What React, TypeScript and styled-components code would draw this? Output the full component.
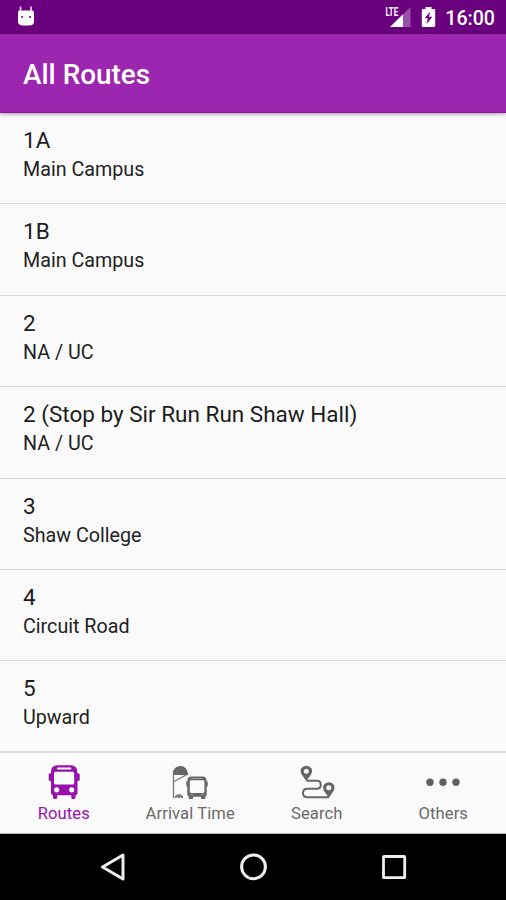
import React from 'react';
import styled, { createGlobalStyle } from 'styled-components';

const GlobalStyle = createGlobalStyle`
  * { box-sizing: border-box; }
  body { margin: 0; background: #fafafa; }
`;

const Screen = styled.div`
  width: 506px;
  height: 900px;
  display: flex;
  flex-direction: column;
  overflow: hidden;
  background: #fafafa;
  font-family: Roboto, sans-serif;
`;

const StatusBar = styled.header`
  height: 34px;
  flex: none;
  display: flex;
  align-items: center;
  justify-content: space-between;
  padding: 0 11px 0 17px;
  background: #6a007d;
  color: #fff;
`;

const StatusIcons = styled.div`
  display: flex;
  align-items: center;
`;

const Clock = styled.span`
  margin-left: 9.5px;
  font-size: 19.6px;
  font-weight: 500;
  line-height: 32px;
  padding-top: 4px;
`;

const AppBar = styled.div`
  height: 79px;
  flex: none;
  display: flex;
  align-items: center;
  padding: 4px 23px 0;
  background: #9d26b1;
  border-bottom: 1px solid #8b1aa0;
  box-shadow: 0 1px 4px rgba(0, 0, 0, 0.38);
  z-index: 1;
`;

const Title = styled.h1`
  margin: 0;
  color: #fff;
  font-size: 27.9px;
  font-weight: 500;
  line-height: 36px;
`;

const RouteList = styled.ul`
  flex: 1;
  margin: 0;
  padding: 0;
  list-style: none;
  display: grid;
  grid-template-rows: repeat(7, 91.4px);
`;

const RouteRow = styled.li`
  padding: 13px 23px 0;
  border-bottom: 1px solid #d9d9d9;

  &:last-child { border-bottom: 2px solid #dedede; }
`;

const RouteName = styled.div`
  font-size: 22.5px;
  line-height: 28px;
  color: #1c1c1c;
`;

const RouteArea = styled.div`
  margin-top: 2px;
  font-size: 19.7px;
  line-height: 28px;
  color: #222;
`;

const TabBar = styled.nav`
  height: 81px;
  flex: none;
  display: grid;
  grid-template-columns: repeat(4, 1fr);
  background: #fafafa;
  border-bottom: 1px solid #b5b5b5;
`;

const Tab = styled.div<{ $active?: boolean }>`
  display: flex;
  flex-direction: column;
  align-items: center;
  padding: 10px 0 0 1px;
  color: ${(p) => (p.$active ? '#9712aa' : '#6a6a6a')};
  font-size: 16.6px;
  line-height: 22px;
  letter-spacing: 0.1px;

  svg { display: block; height: 38px; margin-bottom: 2px; }
`;

const SystemBar = styled.footer`
  height: 66px;
  flex: none;
  display: flex;
  justify-content: center;
  align-items: center;
  gap: 100px;
  background: #000;
`;

const AndroidIcon = () => (
  <svg width="18" height="24" viewBox="0 0 18 24" fill="#fff">
    <path d="M3.500 1.500v5M14 1.500v5" stroke="#e3c8e8" strokeWidth="1.8" />
    <path d="M2.500 5.500h12.800q1.700 0 1.700 1.700v9.300q0 4-5 4H6q-5 0-5-4V7.200q0-1.700 1.500-1.700z" />
    <circle cx="5" cy="12" r="1" fill="#6a007d" />
    <circle cx="13" cy="12" r="1" fill="#6a007d" />
  </svg>
);

const SignalIcon = () => (
  <svg width="27" height="24" viewBox="0 0 27 24">
    <path d="M25.500 2v20H5z" fill="#9652a3" />
    <path d="M18 9.300V22H5z" fill="#fff" />
    <path d="M0 0h13v13H0z" fill="#6a007d" />
    <text x="0.5" y="10.8" fontFamily="Roboto, sans-serif" fontSize="12" fontWeight="700" textLength="12.5" lengthAdjust="spacingAndGlyphs" fill="#fff">LTE</text>
  </svg>
);

const BatteryIcon = () => (
  <svg width="15" height="22" viewBox="0 0 15 22">
    <path d="M4.500 1h6v2H13q1.200 0 1.200 1.200v15.600q0 1.200-1.200 1.200H2Q.8 21 .8 19.800V4.200Q.8 3 2 3h2.500z" fill="#fff" />
    <path d="M9.200 5.500 3.600 12.300h3.200l-1.300 5.700 5.900-7.200H8z" fill="#6a007d" />
  </svg>
);

const IconGap = styled.span`
  width: 9px;
`;

const BusIcon = () => (
  <svg width="34" viewBox="0 0 34 38" fill="currentColor">
    <path fillRule="evenodd" d="M10 2.300h14q5.800.4 6.300 6v2h1.200q1.200.2 1.200 1.500v4.700q0 1.500-1.400 1.500h-.8V30q0 2-2 2.200v2.300q0 1.500-1.600 1.500h-1q-1.600 0-1.600-1.500v-2.300H10.200v2.300q0 1.500-1.600 1.500h-1Q6 36 6 34.500v-2.300Q4 32 4 30V18h-.8q-1.500 0-1.500-1.500v-4.700q0-1.300 1.300-1.500h1v-2q.4-5.600 6-6zM11 4.500q-1.200 0-1.200 1t1.200 1h12.200q1.200 0 1.200-1t-1.200-1zM8.500 8.800Q7 8.800 7 10.300v9.700q0 1.600 1.500 1.600h17.200q1.500 0 1.500-1.600v-9.700q0-1.500-1.500-1.500zM9.700 24.200a2.600 2.600 0 1 0 0 5.200 2.600 2.600 0 0 0 0-5.200zm15 0a2.600 2.600 0 1 0 0 5.200 2.600 2.600 0 0 0 0-5.200z" />
  </svg>
);

const StopIcon = () => (
  <svg width="38" viewBox="0 0 38 38" fill="none">
    <path d="M2.300 9.500Q3 3 9.500 3q6.500 0 7.800 9H2z" fill="#666" />
    <path d="M2.500 7.500V35M3 18.500l13-7" stroke="#777" strokeWidth="1.300" />
    <path d="M4.500 35q.7-2.700 3.500-2.700t3.300 2.700M8 32.300V35" stroke="#777" strokeWidth="2" />
    <path fill="#666" fillRule="evenodd" d="M20 13.500h12q2.500 0 3.200 2l.4 3h1.100v5h-1v8q0 2-1.500 2.300V36h-4.200v-2.200h-8V36h-4.200v-2.400q-1.500-.3-1.500-2.300v-8h-1v-5h1.100l.4-3q.7-1.800 3.200-1.800zm.200 3.700q-1.400 0-1.400 1.400v10q0 1.300 1.300 1.300h12q1.300 0 1.300-1.300v-10q0-1.400-1.400-1.400z" />
    <path d="M19.500 31.700h2.500m8 0h2.500" stroke="#aaa" strokeWidth="1" />
    <path d="M20.500 15.500h11" stroke="#999" strokeWidth="1" />
  </svg>
);

const SearchRouteIcon = () => (
  <svg width="36" viewBox="0 0 36 38" fill="none">
    <path d="M7.500 17.700h10.300q4 0 4 4t-4 4H8.500q-4.500 0-4.500 4.300t4.500 4.300H30" stroke="#666" strokeWidth="2" />
    <path fill="#666" fillRule="evenodd" d="M7.300 18 3 12Q.6 8 2.200 5.200 3.800 2.700 7.300 2.700t5.100 2.500q1.700 3-.7 6.900zM7.300 5.700a2.500 2.500 0 1 0 0 5 2.500 2.500 0 0 0 0-5zM29.800 35l-4.200-6.200q-2.500-4-.8-7 1.600-2.500 5-2.500t5 2.500q1.700 3-.8 7zm0-12.700a2.500 2.500 0 1 0 0 5 2.500 2.500 0 0 0 0-5z" />
  </svg>
);

const MoreIcon = () => (
  <svg width="36" viewBox="0 0 36 38" fill="#606060">
    <circle cx="5" cy="19.300" r="3.700" />
    <circle cx="18" cy="19.300" r="3.700" />
    <circle cx="31" cy="19.300" r="3.700" />
  </svg>
);

const BackIcon = () => (
  <svg width="40" height="32" viewBox="0 0 40 32" fill="none">
    <path d="M9.500 16 30 4v24z" stroke="#eee" strokeWidth="3" strokeLinejoin="round" />
  </svg>
);

const HomeIcon = () => (
  <svg width="40" height="32" viewBox="0 0 40 32" fill="none">
    <circle cx="20.500" cy="15.800" r="11.900" stroke="#eee" strokeWidth="3" />
  </svg>
);

const RecentIcon = () => (
  <svg width="40" height="32" viewBox="0 0 40 32" fill="none">
    <rect x="10.500" y="5.500" width="21.200" height="21.200" rx="0.500" stroke="#eee" strokeWidth="2.800" strokeLinejoin="round" />
  </svg>
);

const routes = [
  { name: '1A', area: 'Main Campus' },
  { name: '1B', area: 'Main Campus' },
  { name: '2', area: 'NA / UC' },
  { name: '2 (Stop by Sir Run Run Shaw Hall)', area: 'NA / UC' },
  { name: '3', area: 'Shaw College' },
  { name: '4', area: 'Circuit Road' },
  { name: '5', area: 'Upward' },
];

const tabs = [
  { label: 'Routes', Icon: BusIcon, active: true },
  { label: 'Arrival Time', Icon: StopIcon },
  { label: 'Search', Icon: SearchRouteIcon },
  { label: 'Others', Icon: MoreIcon },
];

export default function App() {
  return (
    <>
      <GlobalStyle />
      <Screen>
        <StatusBar>
          <AndroidIcon />
          <StatusIcons>
            <SignalIcon />
            <IconGap />
            <BatteryIcon />
            <Clock>16:00</Clock>
          </StatusIcons>
        </StatusBar>
        <AppBar>
          <Title>All Routes</Title>
        </AppBar>
        <RouteList>
          {routes.map((route) => (
            <RouteRow key={route.name}>
              <RouteName>{route.name}</RouteName>
              <RouteArea>{route.area}</RouteArea>
            </RouteRow>
          ))}
        </RouteList>
        <TabBar>
          {tabs.map(({ label, Icon, active }) => (
            <Tab key={label} $active={active}>
              <Icon />
              {label}
            </Tab>
          ))}
        </TabBar>
        <SystemBar>
          <BackIcon />
          <HomeIcon />
          <RecentIcon />
        </SystemBar>
      </Screen>
    </>
  );
}
